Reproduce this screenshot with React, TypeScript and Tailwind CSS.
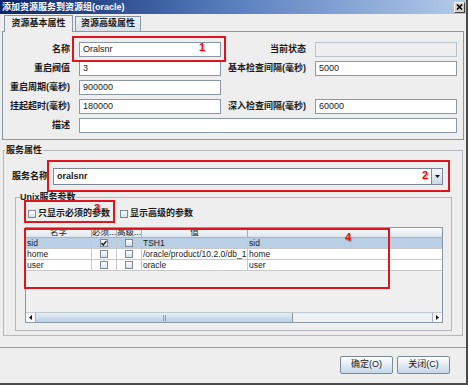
import React from 'react';

const Field = ({ value = '', className = '', disabled = false }: { value?: string; className?: string; disabled?: boolean }) => (
  <div
    className={`h-[15px] border text-[9px] leading-[13px] pl-[3px] text-[#222] ${
      disabled ? 'bg-[#eeeeee] border-[#b8c2cc]' : 'bg-white border-[#8a98a6]'
    } ${className}`}
  >
    {value}
  </div>
);

const Check = ({ checked = false }: { checked?: boolean }) => (
  <div className="w-[8px] h-[8px] border border-[#7a8a99] bg-gradient-to-b from-white to-[#d4e0ec] flex items-center justify-center">
    {checked && (
      <svg width="6" height="6" viewBox="0 0 6 6">
        <path d="M0.5 3 L2.3 5 L5.5 0.8" stroke="#111" strokeWidth="1.3" fill="none" />
      </svg>
    )}
  </div>
);

const Mark = ({ n, className }: { n: string; className: string }) => (
  <span className={`absolute text-[11px] font-bold leading-none text-[#e0141c] [text-shadow:1px_1px_1px_rgba(0,0,0,0.35)] ${className}`}>
    {n}
  </span>
);

const rows = [
  { name: 'sid', must: true, value: 'TSH1', extra: 'sid', selected: true },
  { name: 'home', must: false, value: '/oracle/product/10.2.0/db_1', extra: 'home', selected: false },
  { name: 'user', must: false, value: 'oracle', extra: 'user', selected: false },
];

export default function App() {
  return (
    <div className="relative w-[468px] h-[385px] overflow-hidden bg-[#eeeeee] border-r-2 border-b-2 border-[#4a4a4a] flex flex-col font-['Liberation_Sans','Noto_Sans_CJK_SC',sans-serif] text-[#1a1a1a]">
      {/* title bar */}
      <div className="h-[14px] shrink-0 bg-gradient-to-r from-[#0a246a] via-[#5a7fbf] to-[#b4cbe9] flex items-center justify-between pl-[2px] pr-[1px]">
        <span className="text-white text-[9px] font-bold leading-none">添加资源服务到资源组(oracle)</span>
        <div className="w-[11px] h-[11px] bg-[#d4d0c8] border border-t-white border-l-white border-r-[#404040] border-b-[#404040] flex items-center justify-center">
          <svg width="7" height="6" viewBox="0 0 7 6">
            <path d="M1 0.5 L6 5.5 M6 0.5 L1 5.5" stroke="#000" strokeWidth="1.6" />
          </svg>
        </div>
      </div>

      {/* tabs */}
      <div className="h-[17px] shrink-0 flex items-end pl-[4px] gap-[2px]">
        <div className="relative z-10 -mb-px h-[17px] w-[69px] bg-[#eeeeee] border border-b-0 border-[#8a98a6] flex items-center justify-center text-[9px] font-bold">
          资源基本属性
        </div>
        <div className="h-[15px] w-[66px] bg-gradient-to-b from-[#eef2f6] to-[#d8dfe7] border border-b-0 border-[#8a98a6] flex items-center justify-center text-[9px] font-bold">
          资源高级属性
        </div>
      </div>

      {/* basic properties panel */}
      <div className="mx-[2px] h-[109px] shrink-0 border border-[#8a98a6] pt-[10px] flex flex-col gap-[4px] text-[9px]">
        <div className="flex items-center">
          <span className="w-[67px] text-right font-bold">名称</span>
          <Field value="Oralsnr" className="ml-[9px] w-[142px]" />
          <span className="w-[85px] text-right font-bold">当前状态</span>
          <Field disabled className="ml-[9px] w-[142px]" />
        </div>
        <div className="flex items-center">
          <span className="w-[67px] text-right font-bold">重启阀值</span>
          <Field value="3" className="ml-[9px] w-[142px]" />
          <span className="w-[85px] text-right font-bold">基本检查间隔(毫秒)</span>
          <Field value="5000" className="ml-[9px] w-[142px]" />
        </div>
        <div className="flex items-center">
          <span className="w-[67px] text-right font-bold">重启周期(毫秒)</span>
          <Field value="900000" className="ml-[9px] w-[142px]" />
        </div>
        <div className="flex items-center">
          <span className="w-[67px] text-right font-bold">挂起超时(毫秒)</span>
          <Field value="180000" className="ml-[9px] w-[142px]" />
          <span className="w-[85px] text-right font-bold">深入检查间隔(毫秒)</span>
          <Field value="60000" className="ml-[9px] w-[142px]" />
        </div>
        <div className="flex items-center">
          <span className="w-[67px] text-right font-bold">描述</span>
          <Field className="ml-[9px] w-[378px]" />
        </div>
      </div>

      {/* service properties */}
      <fieldset className="mt-[5px] ml-[3px] mr-[3px] h-[191px] shrink-0 border border-[#b4b8bc] pl-0 pr-0">
        <legend className="ml-[1px] px-[1px] text-[9px] leading-[10px] font-bold">服务属性</legend>
        <div className="mt-[13px] flex items-center pl-[8px]">
          <span className="text-[9px] font-bold">服务名称</span>
          <div className="ml-[5px] w-[390px] h-[17px] border border-[#7a8a99] bg-white flex">
            <span className="flex-1 pl-[3px] text-[9px] leading-[15px] font-bold">oralsnr</span>
            <div className="w-[11px] border-l border-[#7a8a99] bg-gradient-to-b from-[#f4f8fb] to-[#c9d8e7] flex items-center justify-center">
              <svg width="5" height="3" viewBox="0 0 5 3">
                <path d="M0 0 H5 L2.5 3 Z" fill="#111" />
              </svg>
            </div>
          </div>
        </div>

        <fieldset className="mt-[7px] ml-[11px] mr-[10px] h-[139px] border border-[#b4b8bc] pl-[4px] pr-0">
          <legend className="text-[9px] leading-[10px] font-bold">Unix服务参数</legend>
          <div className="mt-[6px] h-[11px] flex items-center pl-[8px] text-[9px] font-bold">
            <Check />
            <span className="ml-[2px]">只显示必须的参数</span>
            <div className="ml-[10px]">
              <Check />
            </div>
            <span className="ml-[2px]">显示高级的参数</span>
          </div>

          {/* table scroll pane */}
          <div className="mt-[8px] ml-[5px] w-[418px] h-[96px] border border-[#8a98a6] bg-[#f0f0f0] flex flex-col text-[8.5px]">
            <div className="h-[10px] flex bg-gradient-to-b from-[#fbfcfd] to-[#dfe6ed] border-b border-[#a8b2bc] leading-[9px]">
              <div className="w-[66px] text-center border-r border-[#a8b2bc]">名字</div>
              <div className="w-[25px] text-center border-r border-[#a8b2bc] overflow-hidden whitespace-nowrap">必须...</div>
              <div className="w-[25px] text-center border-r border-[#a8b2bc] overflow-hidden whitespace-nowrap">高级...</div>
              <div className="w-[106px] text-center border-r border-[#a8b2bc]">值</div>
              <div className="flex-1" />
            </div>
            {rows.map((r) => (
              <div
                key={r.name}
                className={`h-[11px] flex border-b border-[#c8c8c8] leading-[10px] ${r.selected ? 'bg-[#b8cfe5]' : 'bg-white'}`}
              >
                <div className="w-[66px] pl-[1px] border-r border-[#c8c8c8]">{r.name}</div>
                <div className="w-[25px] border-r border-[#c8c8c8] flex items-center justify-center">
                  <Check checked={r.must} />
                </div>
                <div className="w-[25px] border-r border-[#c8c8c8] flex items-center justify-center">
                  <Check />
                </div>
                <div className="w-[106px] pl-[1px] border-r border-[#c8c8c8] overflow-hidden whitespace-nowrap">{r.value}</div>
                <div className="flex-1 pl-[1px]">{r.extra}</div>
              </div>
            ))}
            <div className="flex-1" />
            {/* horizontal scrollbar */}
            <div className="h-[10px] flex border-t border-[#c0c8d0] bg-[#eef1f4]">
              <div className="w-[10px] border-r border-[#a8b2bc] flex items-center justify-center bg-[#f4f6f8]">
                <svg width="3" height="5" viewBox="0 0 3 5">
                  <path d="M3 0 V5 L0 2.5 Z" fill="#111" />
                </svg>
              </div>
              <div className="w-[257px] border-r border-[#8a98a6] bg-gradient-to-b from-[#e6eef7] to-[#bcd0e6] flex items-center justify-center">
                <div className="w-[3px] h-[6px] border-x border-[#8a98a6]" />
              </div>
              <div className="flex-1" />
              <div className="w-[10px] border-l border-[#a8b2bc] flex items-center justify-center bg-[#f4f6f8]">
                <svg width="3" height="5" viewBox="0 0 3 5">
                  <path d="M0 0 V5 L3 2.5 Z" fill="#111" />
                </svg>
              </div>
            </div>
          </div>
        </fieldset>
      </fieldset>

      {/* buttons */}
      <div className="mt-auto h-[36px] shrink-0 border-t border-[#a0a0a0] flex items-start justify-end gap-[4px] pt-[8px] pr-[16px]">
        <div className="w-[53px] h-[18px] border border-[#7a8a99] rounded-[2px] bg-gradient-to-b from-white to-[#c6d7e9] flex items-center justify-center text-[9px]">
          确定(O)
        </div>
        <div className="w-[53px] h-[18px] border border-[#7a8a99] rounded-[2px] bg-gradient-to-b from-white to-[#c6d7e9] flex items-center justify-center text-[9px]">
          关闭(C)
        </div>
      </div>

      {/* red annotation boxes */}
      <div className="absolute left-[72px] top-[36px] w-[154px] h-[26px] border-2 border-[#e0141c]" />
      <Mark n="1" className="left-[199px] top-[42px]" />
      <div className="absolute left-[47px] top-[160px] w-[403px] h-[32px] border-2 border-[#e0141c]" />
      <Mark n="2" className="left-[422px] top-[170px]" />
      <div className="absolute left-[24px] top-[200px] w-[91px] h-[23px] border-2 border-[#e0141c]" />
      <Mark n="3" className="left-[94px] top-[203px]" />
      <div className="absolute left-[24px] top-[228px] w-[366px] h-[61px] border-2 border-[#e0141c]" />
      <Mark n="4" className="left-[345px] top-[232px]" />
    </div>
  );
}
